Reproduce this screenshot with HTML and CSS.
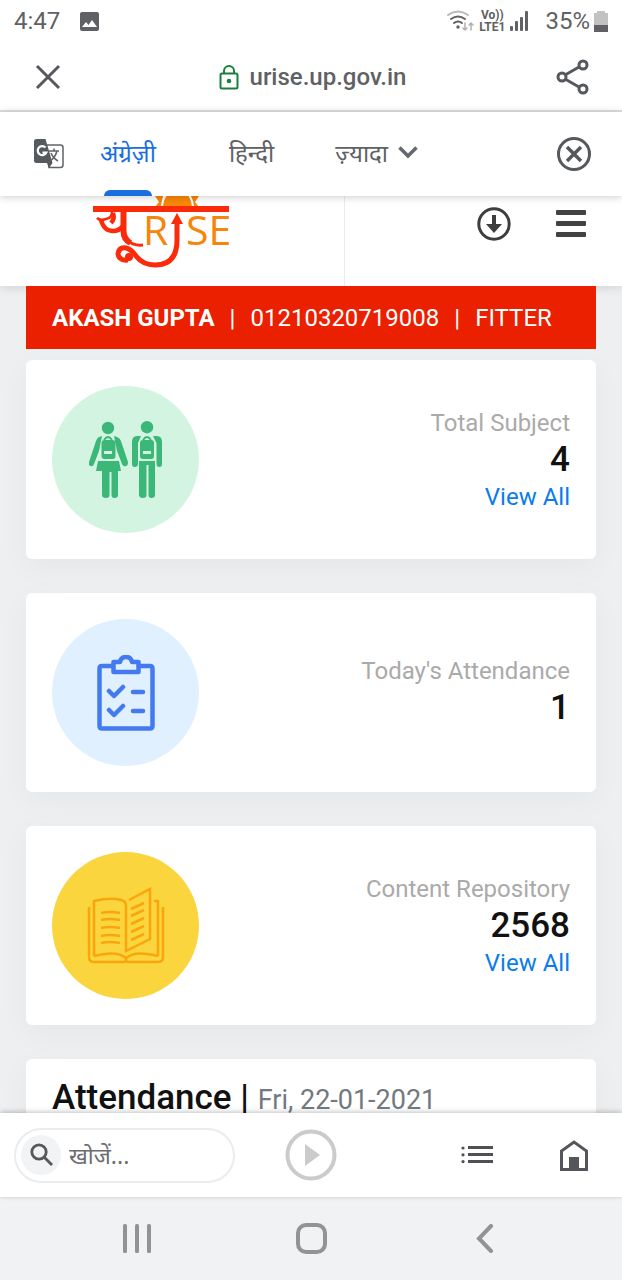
FILE: index.html
```html
<!DOCTYPE html>
<html lang="hi">
<head>
<meta charset="utf-8">
<meta name="viewport" content="width=device-width, initial-scale=1">
<title>urise.up.gov.in</title>
<link rel="stylesheet" href="styles.css">
</head>
<body>
<div class="status-bar">
  <span class="clock">4:47</span>
  <svg class="picture-icon" width="19" height="19" viewBox="0 0 19 19"><rect width="19" height="19" rx="2" fill="#606164"/><path d="M2 15l4-5 2.500 3L12 8l5 7z" fill="#fff"/></svg>
  <svg class="wifi-icon" width="28" height="22" viewBox="0 0 28 22" fill="none" stroke-width="2" stroke-linecap="round"><path d="M1 5Q11-2 21 5" stroke="#b8b8b8"/><path d="M4 9Q11 4 18 9M7 13Q11 10 15 13" stroke="#606164"/><circle cx="11" cy="17" r="1.700" fill="#606164"/><path d="M18 13v7M16 18l2 2 2-2M24 20v-7M22 15l2-2 2 2" stroke="#b0b0b0" stroke-width="1.500"/></svg>
  <span class="volte">Vo))<br>LTE1</span>
  <svg class="signal-icon" width="20" height="20" viewBox="0 0 20 20" fill="#606164"><rect x="1" y="15" width="3" height="5" rx="1"/><rect x="6" y="10" width="3" height="10" rx="1"/><rect x="11" y="6" width="3" height="14" rx="1"/><rect x="16" y="0" width="3" height="20" rx="1"/></svg>
  <span class="charge">35%</span>
  <svg width="14" height="21" viewBox="0 0 14 21"><path d="M3 0h8v2h3v19H0V2h3z" fill="#c2c2c2"/><path d="M0 14h14v7H0z" fill="#606164"/></svg>
</div>

<header class="address-bar">
  <button class="icon-button" type="button" aria-label="Close"><svg width="26" height="26" viewBox="0 0 26 26" fill="none" stroke="#55585c" stroke-width="3"><path d="M2 2l22 22M24 2L2 24"/></svg></button>
  <div class="site">
    <svg width="20" height="25" viewBox="0 0 20 25" fill="none" stroke="#188038" stroke-width="2"><rect x="1.500" y="8.500" width="17" height="15" rx="1.500"/><path d="M5 8V6a5 5 0 0 1 10 0v2"/><circle cx="10" cy="16" r="2.300" fill="#188038" stroke="none"/></svg>
    <span>urise.up.gov.in</span>
  </div>
  <button class="icon-button" type="button" aria-label="Share"><svg width="34" height="36" viewBox="0 0 34 36" fill="none" stroke="#55585c" stroke-width="3"><path d="M9 16L23 8M9 20l14 8"/><circle cx="6" cy="18" r="4"/><circle cx="27" cy="6" r="4"/><circle cx="27" cy="30" r="4"/></svg></button>
</header>

<nav class="translate-bar">
  <svg width="30" height="30" viewBox="0 0 30 30"><path d="M12 6h14.500q2.500 0 2.500 2.500v17.500q0 2.500-2.500 2.500H15z" fill="#fff" stroke="#606468" stroke-width="1.500"/><path d="M2.500 0h9l7 24H2.500Q0 24 0 21.500v-19Q0 0 2.500 0zM13 24h5.500L15 29z" fill="#565a5f"/><path d="M11.500 8.500a4.500 4.500 0 1 0 .8 5H8.500" fill="none" stroke="#fff" stroke-width="2.200"/><path d="M15 12h10M20 9.500V12M23 12q-2 7-7 10M17 14q2 5 7 8" fill="none" stroke="#606468" stroke-width="1.600"/></svg>
  <div class="languages">
    <button class="language selected" type="button">अंग्रेज़ी</button>
    <button class="language" type="button">हिन्दी</button>
    <button class="language more" type="button">ज़्यादा <svg width="20" height="13" viewBox="0 0 20 13" fill="none" stroke="#65686c" stroke-width="3.500"><path d="M1.500 1.500l8.500 8.500 8.500-8.500"/></svg></button>
  </div>
  <button class="icon-button" type="button" aria-label="Dismiss"><svg width="36" height="36" viewBox="0 0 36 36" fill="none" stroke="#55585c" stroke-width="3"><circle cx="18" cy="18" r="15.500"/><path d="M11 11l14 14M25 11L11 25" stroke-width="3.500"/></svg></button>
</nav>

<div class="page-header">
  <div class="brand">
    <svg width="137" height="73" viewBox="0 0 137 73" role="img" aria-label="यू RISE">
      <path d="M62 11l4-5-4-6h8l-2 11zM106 11l-4-5 4-6h-8l2 11z" fill="#f6860b"/>
      <path d="M70 11q0-5 2-11h24q3 6 3 11z" fill="#f98708"/>
      <path d="M69 10q0-5 4-11M100 10q0-5-4-11" fill="none" stroke="#fff" stroke-width="2"/>
      <path d="M0 10h136v6H0z" fill="#fb2a0b"/>
      <g fill="none" stroke="#fb2a0b">
        <path d="M4 22q3 3 9 1 6-1 6-7" stroke-width="2.500"/>
        <path d="M20 17q2 6-2 10" stroke-width="4.500"/>
        <path d="M8 24q3 11 12 11 6 0 10-5" stroke-width="4.500"/>
        <path d="M30.500 15v20q0 8 7 12" stroke-width="6"/>
        <path d="M34 44q6 6 16 5" stroke-width="3"/>
        <path d="M35 64q-9 1-10-6 1-7 8-6 5 1 10 8 7 9 19 9 22 0 22-25V27" stroke-width="5"/>
      </g>
      <circle cx="36" cy="61" r="4" fill="#fb2a0b"/>
      <path d="M84 17l6 11H78z" fill="#fb2a0b"/>
      <text class="brand-text" x="50" y="49">R</text>
      <text class="brand-text" x="93" y="49">SE</text>
    </svg>
  </div>
  <div class="header-actions">
    <button class="icon-button" type="button" aria-label="Download"><svg width="34" height="34" viewBox="0 0 34 34"><circle cx="17" cy="17" r="15.200" fill="none" stroke="#3d3d3d" stroke-width="3"/><path d="M15 8h4v9h6l-8 9-8-9h6z" fill="#3d3d3d"/></svg></button>
    <button class="icon-button" type="button" aria-label="Menu"><svg width="30" height="28" viewBox="0 0 30 28" fill="#424242"><rect width="30" height="5" rx="1"/><rect y="11" width="30" height="5" rx="1"/><rect y="22" width="30" height="5" rx="1"/></svg></button>
  </div>
</div>

<main class="dashboard">
  <div class="student"><strong>AKASH GUPTA</strong><span>|</span><span>01210320719008</span><span>|</span><span>FITTER</span></div>
  <div class="cards">
    <section class="card">
      <div class="badge green"><svg width="74" height="77" viewBox="0 0 74 77" fill="#3bb878">
        <circle cx="19" cy="7" r="6.200"/><circle cx="58" cy="6.200" r="6.200"/>
        <path d="M13 15l-3 1Q8 17 7 20L0 41q-1 4 2 4 2 1 3-2l5-13zM25 15l3 1q3 1 4 4l7 21q0 4-2 4-3 1-4-2l-5-13z"/>
        <rect x="12.500" y="19" width="14" height="19" rx="3"/><path d="M9 40h21l2 10h-3v24q0 3-3.500 3-3 0-3-3V51h-2v23q0 3-3.500 3-4 0-4-3V50H7z"/><path d="M15 19q4-6 8 0" fill="none" stroke="#3bb878" stroke-width="1.800"/>
        <path d="M52 15h-4q-5 0-5 6v22q0 3 2.500 3 3.500 0 3.500-3V22zM64 15h4q5 0 5 6v22q0 3-2.500 3-3 0-3-3V22z"/>
        <rect x="51" y="19" width="14" height="19" rx="3"/><path d="M50 40h16v34q0 3-3.500 3-3 0-3-3V44h-2v30q0 3-3.500 3-4 0-4-3z"/><path d="M54 19q4-6 8 0" fill="none" stroke="#3bb878" stroke-width="1.800"/>
        <path d="M15 30h8v3h-8zM54 30h8v3h-8z" fill="#d4f4e2"/></svg></div>
      <div class="stat"><span class="label">Total Subject</span><span class="number">4</span><a href="#">View All</a></div>
    </section>
    <section class="card">
      <div class="badge blue"><svg width="58" height="76" viewBox="0 0 58 76" fill="none" stroke="#437af0" stroke-width="4.500" stroke-linecap="round" stroke-linejoin="round"><path d="M16 11H5q-2.500 0-2.500 2.500v57q0 3 2.500 3h48q2.500 0 2.500-3v-57Q55.500 11 53 11H42"/><path d="M16.500 7H23q1-5 6-5t6 5h6.500v10h-25zM12 36l5 5 9-9M12 55l5 5 9-9M36 37h10M36 56h10"/></svg></div>
      <div class="stat no-link"><span class="label">Today's Attendance</span><span class="number">1</span></div>
    </section>
    <section class="card">
      <div class="badge yellow"><svg width="78" height="77" viewBox="0 0 78 77" fill="none" stroke="#f9a60d" stroke-width="2.500"><path d="M2 20v50q0 5 5 5h29q3 0 3-2 0 2 3 2h29q5 0 5-5V20M7 69V14q17-4 27-1 5 1 5 6v45l24-12V2L42 13M67 14h4v55M7 69q23-6 32 2v5M39 71q9-8 32-2"/><path d="M14 26q9-2 19 0M14 33q9-2 19 0M14 41q9-2 19 0M14 49q9-2 19 0M14 56q9-2 19 0M44 22l13-6M44 29l13-6M44 37l13-6M44 45l13-6M44 53l13-6"/></svg></div>
      <div class="stat"><span class="label">Content Repository</span><span class="number">2568</span><a href="#">View All</a></div>
    </section>
    <section class="card attendance"><h2>Attendance | <small>Fri, 22-01-2021</small></h2></section>
  </div>
</main>

<footer class="toolbar">
  <label class="search">
    <span class="search-icon"><svg width="23" height="24" viewBox="0 0 23 24" fill="none" stroke="#56585c" stroke-width="2.800"><circle cx="9" cy="9" r="7.200"/><path d="M14 14l8 8"/></svg></span>
    <input type="text" placeholder="खोजें..." aria-label="खोजें">
  </label>
  <button class="icon-button play" type="button" aria-label="Play"><svg width="52" height="52" viewBox="0 0 52 52"><circle cx="26" cy="26" r="23.500" fill="none" stroke="#cbcbcb" stroke-width="4"/><path d="M20 15l15 11-15 11z" fill="#cbcbcb"/></svg></button>
  <button class="icon-button list" type="button" aria-label="List"><svg width="32" height="18" viewBox="0 0 32 18" fill="#505155"><path d="M7 0h25v3H7zM7 7h25v3H7zM7 14h25v3H7z"/><circle cx="2" cy="2" r="1.600"/><circle cx="2" cy="8.800" r="1.600"/><circle cx="2" cy="15.600" r="1.600"/></svg></button>
  <button class="icon-button" type="button" aria-label="Home"><svg width="28" height="31" viewBox="0 0 28 31"><path d="M1.500 29.500V11L14 2l12.500 9v18.500z" fill="none" stroke="#55565b" stroke-width="3"/><path d="M9 17h10v12H9z" fill="#55565b"/></svg></button>
</footer>

<nav class="system-nav">
  <button class="icon-button" type="button" aria-label="Recents"><svg width="28" height="29" viewBox="0 0 28 29" fill="#929394"><rect width="4" height="29" rx="1.500"/><rect x="12" width="4" height="29" rx="1.500"/><rect x="24" width="4" height="29" rx="1.500"/></svg></button>
  <button class="icon-button" type="button" aria-label="Home screen"><svg width="31" height="31" viewBox="0 0 31 31"><rect x="2" y="2" width="27" height="27" rx="8" fill="none" stroke="#929394" stroke-width="4"/></svg></button>
  <button class="icon-button" type="button" aria-label="Back"><svg width="18" height="29" viewBox="0 0 18 29" fill="none" stroke="#929394" stroke-width="4" stroke-linecap="round"><path d="M15 2L3 14.500 15 27"/></svg></button>
</nav>
</body>
</html>
```

FILE: styles.css
```css
* { box-sizing: border-box; }

body {
  margin: 0;
  height: 100vh;
  display: flex;
  flex-direction: column;
  background: #fff;
  color: #606164;
  font-family: Roboto, "Noto Sans", sans-serif;
}

svg { display: block; flex: none; }

.icon-button {
  display: flex;
  padding: 0;
  border: 0;
  background: none;
}

.status-bar {
  display: flex;
  align-items: center;
  height: 42px;
  padding: 0 14px;
  font-size: 24px;
}
.picture-icon { margin-left: 20px; }
.wifi-icon { margin-left: auto; }
.volte {
  margin: 0 4px;
  font-size: 12px;
  font-weight: 700;
  line-height: 12px;
  text-align: center;
}
.charge { margin: 0 4px 0 16px; }

.address-bar {
  display: flex;
  align-items: center;
  justify-content: space-between;
  height: 70px;
  padding: 2px 32px 0 35px;
  border-bottom: 2px solid #dfe0e1;
}
.site {
  display: flex;
  flex: 1;
  align-items: center;
  justify-content: center;
  gap: 11px;
  padding-left: 8px;
  font-size: 24px;
  font-weight: 500;
}

.translate-bar {
  position: relative;
  z-index: 2;
  display: flex;
  align-items: center;
  height: 84px;
  padding: 0 30px 0 34px;
  background: #fff;
  box-shadow: 0 1px 8px rgba(0, 0, 0, 0.2);
}
.languages {
  display: flex;
  align-self: stretch;
  flex: 1;
  gap: 73px;
  padding-left: 36px;
}
.language {
  position: relative;
  display: flex;
  align-items: center;
  gap: 10px;
  padding: 0 0 3px;
  border: 0;
  background: none;
  color: #606164;
  font: 400 24px/36px "Noto Sans", sans-serif;
}
.language.more { margin-left: -12px; }
.language.selected { color: #1a6fe0; }
.language.selected::after {
  content: "";
  position: absolute;
  right: 4px;
  bottom: 0;
  left: 4px;
  height: 6px;
  border-radius: 6px 6px 0 0;
  background: #1a6fe0;
}

.page-header {
  position: relative;
  z-index: 1;
  display: flex;
  height: 90px;
  background: #fff;
  box-shadow: 0 1px 10px rgba(0, 0, 0, 0.14);
}
.brand {
  width: 345px;
  padding-left: 93px;
  border-right: 1px solid #ececec;
}
.brand-text {
  fill: #f6860b;
  font: 400 41px "Open Sans", sans-serif;
}
.header-actions {
  display: flex;
  flex: 1;
  align-items: flex-start;
  justify-content: flex-end;
  gap: 45px;
  padding: 11px 36px 0 0;
}
.header-actions .icon-button { align-items: center; height: 34px; }

.dashboard {
  flex: 1;
  min-height: 0;
  overflow: hidden;
  padding: 0 26px;
  background: #eeeff1;
}
.student {
  position: relative;
  z-index: 1;
  display: flex;
  gap: 15px;
  padding: 15px 26px 13px;
  background: #ea2000;
  color: #fff;
  font-size: 24px;
  line-height: 35px;
}
.cards {
  display: flex;
  flex-direction: column;
  gap: 34px;
  padding-top: 11px;
}
.card {
  display: flex;
  align-items: center;
  justify-content: space-between;
  padding: 26px;
  border-radius: 6px;
  background: #fff;
  box-shadow: 0 8px 32px rgba(0, 0, 0, 0.04);
}
.badge {
  display: flex;
  align-items: center;
  justify-content: center;
  width: 147px;
  height: 147px;
  border-radius: 50%;
}
.green { background: #d4f4e2; }
.blue { background: #e1f0ff; }
.yellow { background: #fad53e; }
.stat {
  display: flex;
  flex-direction: column;
  align-items: flex-end;
  font-size: 24px;
  line-height: 36px;
}
.no-link { padding-bottom: 6px; }
.label { color: #aaa; }
.number {
  color: #111;
  font-size: 35px;
  font-weight: 500;
  line-height: 38px;
}
.stat a { color: #0b7bef; text-decoration: none; }

.attendance { padding: 16px 26px; }
.attendance h2 {
  margin: 0;
  color: #111;
  font-size: 35px;
  font-weight: 500;
  line-height: 46px;
}
.attendance small {
  color: #727980;
  font-size: 27px;
  font-weight: 400;
}

.toolbar {
  position: relative;
  display: flex;
  align-items: center;
  height: 84px;
  padding: 0 34px 0 14px;
  background: #fff;
  box-shadow: 0 -1px 5px rgba(0, 0, 0, 0.25);
}
.search {
  display: flex;
  align-items: center;
  gap: 8px;
  width: 221px;
  height: 55px;
  padding: 0 5px;
  border: 2px solid #ebecee;
  border-radius: 28px;
}
.search-icon {
  display: flex;
  flex: none;
  align-items: center;
  justify-content: center;
  width: 40px;
  height: 40px;
  border-radius: 50%;
  background: #f2f3f5;
}
.search input {
  width: 100%;
  min-width: 0;
  padding: 0;
  border: 0;
  outline: 0;
  background: none;
  font: 400 23px/36px "Noto Sans", sans-serif;
}
.search input::placeholder { color: #6c6d70; opacity: 1; }
.play { margin-left: 50px; }
.list { margin: 0 67px 0 auto; }

.system-nav {
  display: grid;
  grid-template-columns: repeat(3, 1fr);
  align-items: center;
  justify-items: center;
  height: 83px;
  padding: 0 50px;
  background: #f1f2f4;
}
```
